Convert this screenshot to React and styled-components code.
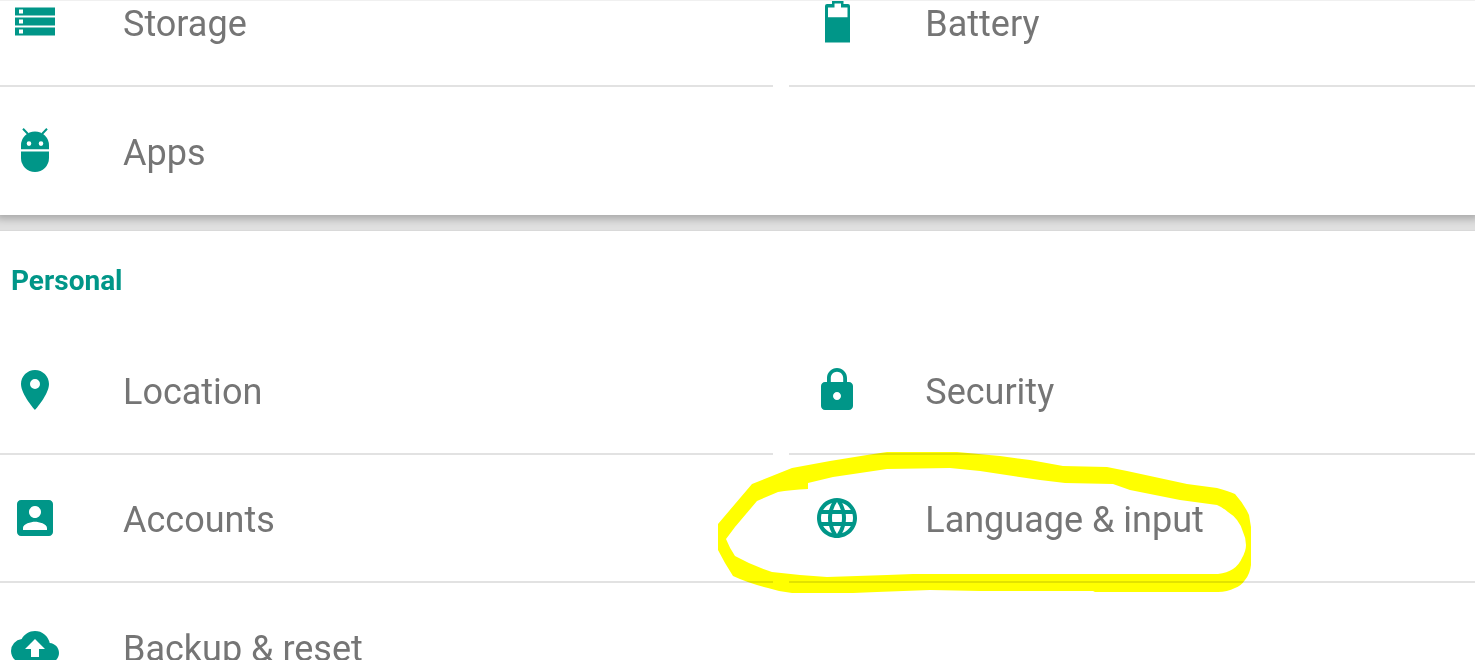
import React from 'react'
import styled, { createGlobalStyle } from 'styled-components'
import { MdLocationOn, MdLock, MdLanguage, MdCloudUpload } from 'react-icons/md'

const GlobalStyle = createGlobalStyle`
  * {
    box-sizing: border-box;
  }
  body {
    margin: 0;
    background: #e0e0e0;
    font-family: Roboto, sans-serif;
  }
`;

const StorageIcon = () => (
  <svg viewBox="0 0 48 48" fill="currentColor" fillRule="evenodd">
    <path d="M4 9.500h40v8H4zM8 11.500v4h4v-4zM4 19.500h40v8H4zM8 21.500v4h4v-4zM4 29.500h40v8H4zM8 31.500v4h4v-4z" />
  </svg>
)

const BatteryIcon = () => (
  <svg viewBox="0 0 48 48" fill="currentColor" fillRule="evenodd">
    <path d="M19 3h11.500v3H35Q37 6 37 8V44.500H12V8Q12 6 14 6H19zM21.500 5.500V9.500H15V19.300h19.500V9.500H28V5.500z" />
  </svg>
)

const AppsIcon = () => (
  <svg viewBox="0 0 48 48" fill="currentColor">
    <path d="M10 24.500h28V31a14 14 0 0 1-28 0z" />
    <path fillRule="evenodd" d="M10 22.300V18.500a14 14 0 0 1 28 0v3.800zM18 14.300a2.300 2.300 0 1 0 0 4.600a2.300 2.300 0 1 0 0-4.600zM30 14.300a2.300 2.300 0 1 0 0 4.600a2.300 2.300 0 1 0 0-4.600z" />
    <path fill="none" stroke="currentColor" strokeWidth="2" d="M12 1.800l5 5.200M36 1.800l-5 5.200" />
  </svg>
)

const AccountIcon = () => (
  <svg viewBox="0 0 24 24" fill="currentColor">
    <path d="M3 5v14c0 1.100.890 2 2 2h14c1.100 0 2-.900 2-2V5c0-1.100-.900-2-2-2H5c-1.110 0-2 .900-2 2zm12 4c0 1.660-1.340 3-3 3s-3-1.340-3-3 1.340-3 3-3 3 1.340 3 3zm-9 8c0-2 4-3.100 6-3.100s6 1.100 6 3.100v1H6v-1z" />
  </svg>
)

const device = [
  { name: "Storage", icon: StorageIcon },
  { name: "Battery", icon: BatteryIcon },
  { name: "Apps", icon: AppsIcon, last: true },
]

const personal = [
  { name: "Location", icon: MdLocationOn },
  { name: "Security", icon: MdLock },
  { name: "Accounts", icon: AccountIcon },
  { name: "Language & input", icon: MdLanguage, marked: true },
  { name: "Backup & reset", icon: MdCloudUpload, last: true },
]

const Marker = () => (
  <MarkerSvg viewBox="709 446 560 160" aria-hidden="true">
    <path
      fill="#ffff00"
      fillRule="evenodd"
      d="M718 524L752 484L792 468L830 461L867 455L887 452H957L1000 456L1030 460L1063 466L1107 467L1127 471L1187 484L1217 488Q1228 491 1235 494Q1244 504 1249 515L1251 527V565Q1250 574 1245 580Q1241 586 1235 588Q1227 592 1218 592H1095L1093 591H980L930 590L877 592L853 593H792Q780 592 768 588Q748 583 733 576L725 563L718 550Z
      M726 539Q730 549 735 556Q753 566 772 572L800 575L827 577L887 575L913 574H1218Q1227 573 1233 569Q1239 565 1242 558Q1246 551 1246 545Q1246 538 1243 532Q1241 525 1237 520Q1233 515 1228 512Q1222 507 1217 505L1180 500L1130 490L1113 484L1065 483L1040 480L980 471L950 468L887 469L833 477L808 483V489Q790 490 778 492L757 501L735 527Z"
    />
  </MarkerSvg>
)

const Settings = ({ items }) => {
  return (
    <List>
      {
        items.map((e) => {
          const Icon = e.icon
          return (
            <Item key={e.name} $last={e.last}>
              <Tile href="#">
                <Icon />
                <Label>{e.name}</Label>
              </Tile>
              {e.marked ? <Marker /> : ""}
            </Item>
          )
        })
      }
    </List>
  )
}

const App = () => {
  return (
    <>
      <GlobalStyle />
      <Screen>
        <Card $scrolled>
          <Settings items={device} />
        </Card>
        <Card>
          <Title>Personal</Title>
          <Settings items={personal} />
        </Card>
      </Screen>
    </>
  )
}

const Screen = styled.main`
  display: flex;
  flex-direction: column;
  gap: 16px;
  height: 100vh;
  border-top: 1px solid #f0f0f0;
  overflow: hidden;
`;

/* the first card is partly scrolled out at the top */
const Card = styled.section`
  flex-shrink: 0;
  margin-top: ${(props) => (props.$scrolled ? "-42px" : "0")};
  background: #fff;
  box-shadow: ${(props) => (props.$scrolled ? "0 0 8px 4px rgba(0, 0, 0, 0.25)" : "0 0 1px rgba(0, 0, 0, 0.2)")};
`;

const Title = styled.h2`
  margin: 0;
  padding: 34px 11px 30px;
  color: #009688;
  font-size: 28px;
  font-weight: 700;
  line-height: 32px;
`;

const List = styled.ul`
  display: grid;
  grid-template-columns: 53fr 47fr;
  column-gap: 16px;
  margin: 0;
  padding: 0;
  list-style: none;
`;

const Item = styled.li`
  position: relative;
  height: 128px;
  padding-left: 11px;
  border-bottom: ${(props) => (props.$last ? "none" : "2px solid #e2e2e2")};

  &:nth-child(even) {
    padding-left: 24px;
  }
`;

const Tile = styled.a`
  display: flex;
  align-items: center;
  gap: 64px;
  height: 100%;
  color: #757575;
  text-decoration: none;

  svg {
    width: 48px;
    height: 48px;
    color: #009688;
  }
`;

const Label = styled.span`
  padding-top: 4px;
  font-size: 36px;
  line-height: 44px;
`;

const MarkerSvg = styled.svg`
  position: absolute;
  top: -9px;
  left: -80px;
  z-index: 1;
  width: 560px;
  height: 160px;
  mix-blend-mode: multiply;
  pointer-events: none;
`;

export default App
